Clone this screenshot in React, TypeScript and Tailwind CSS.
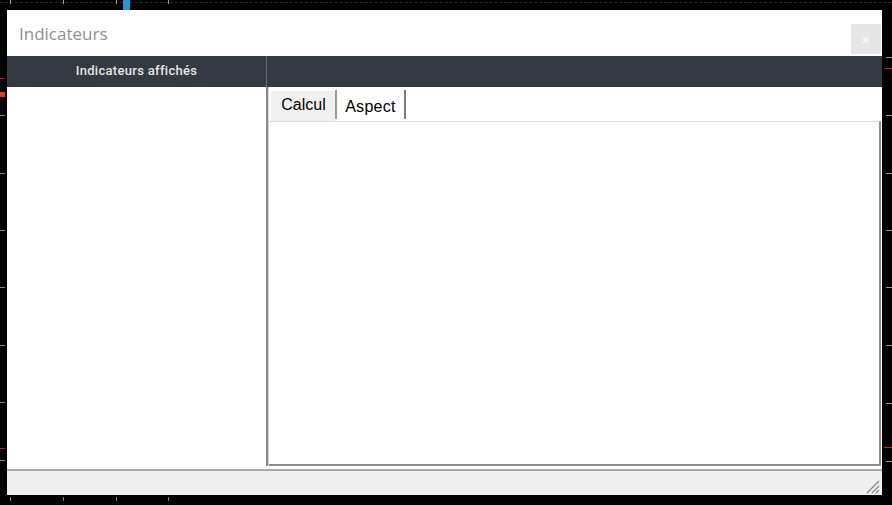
import React from "react";

const hTicks = [10, 63, 116, 168];
const leftTicks = [115, 173, 230, 287, 345, 402, 460];
const rightTicks = [57, 115, 173, 230, 287, 345, 403, 461];

function ChartBackdrop() {
  return (
    <div className="absolute inset-0 pointer-events-none">
      <div className="absolute left-0 right-0 top-[2px] border-t border-dashed border-[#2a2a2a]" />
      {hTicks.map((x) => (
        <div key={"t" + x} className="absolute top-0 w-px h-[4px] bg-[#9a9a9a]" style={{ left: x }} />
      ))}
      {hTicks.map((x) => (
        <div key={"b" + x} className="absolute top-[497px] w-px h-[4px] bg-[#8a8a8a]" style={{ left: x }} />
      ))}
      {leftTicks.map((y) => (
        <div key={"l" + y} className="absolute left-0 w-[5px] h-px bg-[#8a8a8a]" style={{ top: y }} />
      ))}
      {rightTicks.map((y) => (
        <div key={"r" + y} className="absolute left-[886px] w-[6px] h-px bg-[#9a9a9a]" style={{ top: y }} />
      ))}
      <div className="absolute left-[123px] top-0 w-[7px] h-[10px] bg-[#1f9ad6]" />
      <div className="absolute left-0 top-[78px] w-[5px] h-px bg-[#c02020]" />
      <div className="absolute left-0 top-[92px] w-[5px] h-[5px] bg-[#e0401a]" />
      <div className="absolute left-0 top-[448px] w-[5px] h-px bg-[#c02020]" />
      <div className="absolute left-[884px] top-[68px] w-[8px] h-px bg-[#c02020]" />
      <div className="absolute left-[884px] top-[447px] w-[8px] h-px bg-[#c02020]" />
    </div>
  );
}

function ResizeGrip() {
  return (
    <svg width="16" height="16" viewBox="0 0 16 16" className="block">
      <path d="M15 3 L3 15 M15 8 L8 15 M15 12 L12 15" stroke="#8c8c8c" strokeWidth="1.4" />
    </svg>
  );
}

export default function App() {
  return (
    <div className="relative w-[892px] h-[505px] bg-black overflow-hidden">
      <ChartBackdrop />
      <div className="relative pt-[10px] pl-[7px]">
        <div className="w-[875px] h-[485px] bg-white flex flex-col">
          <div className="h-[46px] flex items-center justify-between pl-[12px] pr-[1px]">
            <span className="text-[17px] text-[#8f8f8f] font-['Open_Sans',sans-serif] mt-[2px]">
              Indicateurs
            </span>
            <button className="w-[30px] h-[30px] mt-[12px] bg-[#e6e6e6] text-white text-[15px] leading-none flex items-center justify-center font-['Liberation_Sans',sans-serif]">
              ×
            </button>
          </div>

          <div className="flex-1 flex min-h-0">
            <div className="w-[259px] flex flex-col">
              <div className="h-[31px] bg-[#343a41] flex items-center justify-center pb-[2px] text-[13px] tracking-[0.3px] text-[#e4e4e4] font-medium font-['Roboto',sans-serif]">
                Indicateurs affichés
              </div>
              <div className="flex-1 bg-white" />
            </div>

            <div className="w-[3px] flex flex-col">
              <div className="h-[31px] bg-[#343a41] border-l border-[#6c7177]" />
              <div className="h-[379px] border-l-2 border-[#8a8a8a] bg-[#d6d6d6]" />
            </div>

            <div className="flex-1 flex flex-col">
              <div className="h-[31px] bg-[#343a41]" />
              <div className="h-[34px] flex items-end pl-[2px] font-['Liberation_Sans',sans-serif] text-[16px] text-black">
                <div className="w-[64px] h-[30px] bg-[#f0f0f0] flex items-start justify-center pt-[2px] pl-[1px]">
                  Calcul
                </div>
                <div className="w-[71px] h-[29px] mb-[2px] border-l-2 border-r-2 border-l-[#9a9a9a] border-r-[#7a7a7a] bg-white flex items-start justify-center pt-[5px] tracking-[0.3px]">
                  Aspect
                </div>
              </div>
              <div className="h-[345px] mr-[1px] border-t border-[#dcdcdc] border-r-2 border-b-2 border-r-[#8c8c8c] border-b-[#8c8c8c] bg-white" />
              <div className="flex-1 bg-white" />
            </div>
          </div>

          <div className="h-[26px] bg-[#efefef] border-t-2 border-[#a9a9a9] flex justify-end items-end pr-[2px] pb-[1px]">
            <ResizeGrip />
          </div>
        </div>
      </div>
    </div>
  );
}
